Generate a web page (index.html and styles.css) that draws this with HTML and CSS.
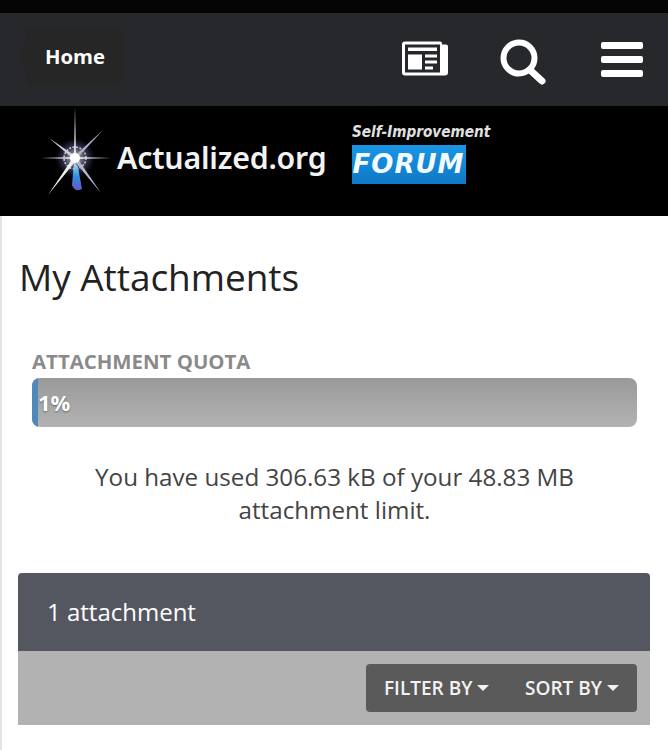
FILE: index.html
```html
<!DOCTYPE html>
<html lang="en">
<head>
<meta charset="utf-8">
<title>My Attachments</title>
<link rel="stylesheet" href="styles.css">
</head>
<body>
<div class="status"></div>
<nav class="nav">
  <a class="crumb">
    <svg class="crumb-tip" viewBox="0 0 8 40" aria-hidden="true"><path d="M8 0 L0 20 L8 40 Z" fill="#262627"/></svg>
    <span class="crumb-body">Home</span>
  </a>
  <div class="nav-icons">
    <svg class="icon-news" viewBox="0 0 46 34" aria-hidden="true">
      <path d="M3 0H38a2 2 0 0 1 2 2V3H44a2 2 0 0 1 2 2V31a3 3 0 0 1-3 3H3a3 3 0 0 1-3-3V3a3 3 0 0 1 3-3Z" fill="#fff"/>
      <rect x="3" y="3" width="35" height="28" fill="#27282c"/>
      <rect x="6" y="6" width="29" height="3.5" fill="#fff"/>
      <rect x="6" y="13" width="14" height="15" fill="#fff"/>
      <rect x="23" y="13" width="12" height="3" fill="#fff"/>
      <rect x="23" y="19" width="12" height="3" fill="#fff"/>
      <rect x="23" y="25" width="8" height="3" fill="#fff"/>
    </svg>
    <svg class="icon-search" viewBox="0 0 46 46" aria-hidden="true">
      <circle cx="19" cy="19" r="15.5" fill="none" stroke="#fff" stroke-width="6"/>
      <path d="M30 31 L42 42" stroke="#fff" stroke-width="7" stroke-linecap="round"/>
    </svg>
    <div class="icon-menu"><span></span><span></span><span></span></div>
  </div>
</nav>
<header class="brand">
  <svg class="star" viewBox="0 0 70 96" aria-hidden="true">
    <defs>
      <radialGradient id="glow"><stop offset="0" stop-color="#fff"/><stop offset=".3" stop-color="#d8d8f0" stop-opacity=".55"/><stop offset="1" stop-color="#5a5ac8" stop-opacity="0"/></radialGradient>
      <linearGradient id="flame" x1="0" y1="0" x2="0" y2="1"><stop offset="0" stop-color="#bfe6ff"/><stop offset=".5" stop-color="#2f8fe0"/><stop offset="1" stop-color="#6a55c8"/></linearGradient>
    </defs>
    <circle cx="34" cy="51" r="20" fill="url(#glow)"/>
    <circle cx="34" cy="51" r="11" fill="none" stroke="#cfcfe0" stroke-width="1.5" stroke-dasharray="2 1.5"/>
    <path d="M33 51 L34 0 L35 51 Z" fill="#f4f4f8"/>
    <path d="M34 50 L0 51 L34 52 L70 51 Z" fill="#e8e8f2"/>
    <path d="M32.5 50 L7 88 L35.5 53 Z" fill="#eee"/>
    <path d="M32.5 53 L60 86 L35.5 50 Z" fill="#b8b8cc"/>
    <path d="M33 49.5 L62 23 L35 52.5 Z" fill="#aeb0c4"/>
    <path d="M35 49.5 L8 31 L33 52.5 Z" fill="#d0d0de"/>
    <path d="M33 55 L31 78 Q34 86 41 82 L37 60 Z" fill="url(#flame)"/>
    <circle cx="34" cy="51" r="5" fill="#fff"/>
  </svg>
  <span class="brand-name">Actualized.org</span>
  <div class="brand-tag">
    <span class="tag-top">Self-Improvement</span>
    <span class="tag-forum">FORUM</span>
  </div>
</header>
<main class="page">
  <h1 class="title">My Attachments</h1>
  <section class="quota">
    <h2 class="quota-label">ATTACHMENT QUOTA</h2>
    <div class="bar"><div class="bar-fill"></div><span class="bar-text">1%</span></div>
    <p class="quota-text">You have used 306.63 kB of your 48.83 MB attachment limit.</p>
  </section>
  <section class="box">
    <div class="box-head">1 attachment</div>
    <div class="box-tools">
      <div class="tools-btn">
        <span class="tool">FILTER BY<i class="caret"></i></span>
        <span class="tool">SORT BY<i class="caret"></i></span>
      </div>
    </div>
  </section>
</main>
</body>
</html>
```
FILE: styles.css
```css
* { box-sizing: border-box; }
html, body { margin: 0; padding: 0; }
body {
  width: 668px;
  height: 750px;
  overflow: hidden;
  background: #fff;
  font-family: "Open Sans", "Liberation Sans", sans-serif;
  color: #353c41;
}
.status { height: 13px; background: #050505; }
.nav {
  height: 93px;
  background: #27282c;
  display: flex;
  align-items: center;
  justify-content: space-between;
  padding: 0 25px 0 19px;
}
.crumb { display: flex; align-items: center; height: 56px; margin-top: -5px; }
.crumb-tip { width: 8px; height: 56px; margin-right: -1px; display: block; }
.crumb-body {
  width: 98px;
  height: 56px;
  background: #262627;
  border-radius: 0 10px 10px 0;
  display: flex;
  align-items: center;
  padding: 0 0 2px 19px;
  color: #fff;
  font-size: 20.3px;
  font-weight: 700;
}
.nav-icons { display: flex; align-items: center; margin-top: -1px; }
.icon-news { width: 46px; height: 35px; margin-right: 53px; display: block; margin-top: -1px; }
.icon-search { width: 46px; height: 46px; margin-right: 55px; display: block; margin-top: 6px; margin-left: -1px; }
.icon-menu { width: 42px; display: flex; flex-direction: column; gap: 7px; }
.icon-menu span { height: 7px; background: #fff; border-radius: 2px; display: block; }
.brand {
  height: 110px;
  background: #000;
  display: flex;
  align-items: flex-start;
  padding-left: 41px;
}
.star { width: 70px; height: 96px; display: block; margin-top: 1px; flex: none; }
.brand-name {
  margin: 30px 0 0 6px;
  font-family: "Noto Sans", "Open Sans", sans-serif;
  font-size: 30.3px;
  line-height: 44px;
  font-weight: 600;
  color: #f2f2f2;
  letter-spacing: -.2px;
}
.brand-tag { margin: 15px 0 0 25px; display: flex; flex-direction: column; align-items: flex-start; }
.tag-top {
  font-family: "DejaVu Sans", sans-serif;
  font-style: italic;
  font-weight: 700;
  font-size: 15px;
  line-height: 22px;
  color: #e0e0e0;
  white-space: nowrap;
  transform: scaleX(.91);
  transform-origin: left center;
  width: 140px;
}
.tag-forum {
  width: 114px;
  height: 39px;
  margin-top: 2px;
  background: linear-gradient(#1a96e6, #0e78c4);
  color: #f4fbff;
  font-family: "DejaVu Sans", sans-serif;
  font-style: italic;
  font-weight: 700;
  font-size: 26px;
  line-height: 39px;
  text-align: center;
  letter-spacing: 1px;
}
.page { padding: 0 18px; border-left: 2px solid #e4e4e4; height: 534px; }
.title {
  margin: 0 0 0 -1px;
  padding-top: 36px;
  font-size: 37px;
  line-height: 50px;
  font-weight: 400;
  color: #222;
  letter-spacing: -.05px;
}
.quota { margin: 0 13px 0 12px; padding-top: 46px; }
.quota-label {
  margin: 0;
  font-size: 20.4px;
  line-height: 26px;
  font-weight: 700;
  color: #8a8a8a;
}
.bar {
  position: relative;
  height: 49px;
  margin-top: 4px;
  padding-bottom: 2px;
  background: linear-gradient(#999, #b3b3b3);
  border-radius: 8px;
  overflow: hidden;
  display: flex;
  align-items: center;
}
.bar-fill { width: 6px; align-self: stretch; margin-bottom: -2px; background: #5088bc; }
.bar-text { color: #fff; font-size: 22px; font-weight: 700; text-shadow: 0 1px 2px rgba(0,0,0,.4); }
.quota-text {
  margin: 33px 30px 0;
  font-size: 24.2px;
  line-height: 33px;
  text-align: center;
  color: #444;
}
.box { margin-top: 47px; width: 632px; margin-left: -2px; }
.box-head {
  height: 78px;
  background: #555760;
  border-radius: 4px 4px 0 0;
  color: #fff;
  font-size: 24px;
  display: flex;
  align-items: center;
  padding: 0 0 2px 29px;
}
.box-tools {
  height: 74px;
  background: #b2b2b2;
  display: flex;
  justify-content: flex-end;
  align-items: flex-start;
  padding: 13px 13px 0 0;
}
.tools-btn {
  width: 271px;
  height: 48px;
  background: #5a5a5a;
  border-radius: 4px;
  display: flex;
  align-items: center;
  justify-content: space-between;
  padding: 0 18px 0 18px;
  color: #f2f2f2;
  font-size: 19px;
  font-weight: 600;
}
.tool { display: flex; align-items: center; }
.caret {
  display: block;
  width: 0;
  height: 0;
  margin-left: 5px;
  border-left: 6px solid transparent;
  border-right: 6px solid transparent;
  border-top: 6px solid #f2f2f2;
}
```
